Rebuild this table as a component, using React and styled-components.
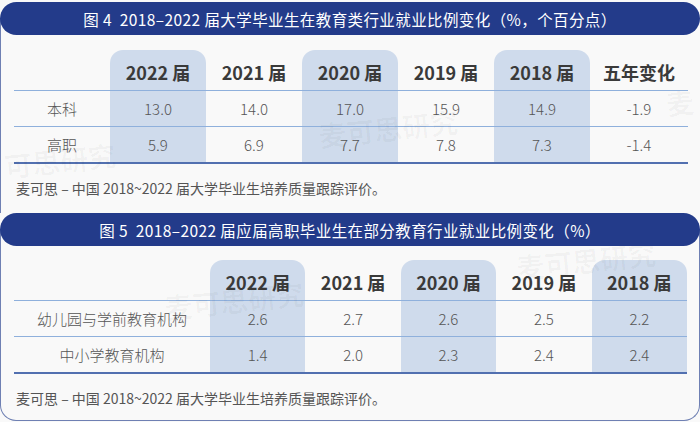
import React from "react";
import styled, { createGlobalStyle } from "styled-components";

const GlobalStyle = createGlobalStyle`
  html, body {
    margin: 0;
    padding: 0;
    background: #f9f9f9;
  }
  body {
    font-family: "Noto Sans CJK SC", "Noto Sans", sans-serif;
  }
`;

const Page = styled.div`
  position: relative;
  width: 700px;
  height: 422px;
  overflow: hidden;
  padding-top: 2px;
  box-sizing: border-box;
`;

const Panel = styled.section`
  display: flex;
  flex-direction: column;
`;

const TitleBar = styled.div`
  height: 33px;
  background: #233b8a;
  border-radius: 17px;
  color: #fff;
  font-size: 15.5px;
  font-weight: 400;
  letter-spacing: 0.4px;
  display: flex;
  align-items: center;
  justify-content: center;
  position: relative;
  z-index: 1;
`;

const Body = styled.div`
  margin-top: -17px;
  padding: ${(p) => p.$top}px 12px 0 13px;
  border-left: 1px solid #6f80b3;
  border-right: ${(p) => (p.$closed ? "1px solid #6f80b3" : "none")};
  border-bottom: ${(p) => (p.$closed ? "1px solid #6f80b3" : "none")};
  border-radius: ${(p) => (p.$closed ? "0 0 16px 16px" : "0")};
  height: ${(p) => p.$height}px;
  box-sizing: border-box;
`;

const Table = styled.div`
  display: flex;
  flex-direction: column;
`;

const Row = styled.div`
  display: grid;
  grid-template-columns: ${(p) => p.$cols};
  height: ${(p) => p.$h}px;
  border-bottom: ${(p) => (p.$last ? "2px solid #5270b0" : "1px solid #8fb0dc")};
`;

const Cell = styled.div`
  display: flex;
  align-items: center;
  justify-content: center;
  background: ${(p) => (p.$hl ? "#cfdbec" : "transparent")};
  border-radius: ${(p) => (p.$hl && p.$head ? "13px 13px 0 0" : "0")};
  color: ${(p) => (p.$head ? "#3a3a3a" : "#555")};
  font-size: ${(p) => (p.$head ? "18px" : "15px")};
  font-weight: ${(p) => (p.$head ? 700 : 300)};
  padding-top: ${(p) => (p.$head ? "3px" : "0")};
  white-space: nowrap;
`;

const Source = styled.div`
  margin-top: 15px;
  padding-left: 2px;
  font-size: 14px;
  color: #555;
  line-height: 18px;
`;

const Watermark = styled.span`
  position: absolute;
  left: ${(p) => p.$x}px;
  top: ${(p) => p.$y}px;
  font-size: 28px;
  font-weight: 700;
  color: rgba(0, 0, 0, 0.03);
  transform: rotate(-6deg);
  pointer-events: none;
  white-space: nowrap;
`;

const years = ["2022 届", "2021 届", "2020 届", "2019 届", "2018 届"];
const hlCols = [true, false, true, false, true];

const table1 = {
  cols: "96px repeat(5, 96px) 98px",
  head: [...years, "五年变化"],
  rows: [
    ["本科", "13.0", "14.0", "17.0", "15.9", "14.9", "-1.9"],
    ["高职", "5.9", "6.9", "7.7", "7.8", "7.3", "-1.4"],
  ],
};

const table2 = {
  cols: "196px repeat(5, 1fr)",
  head: years,
  rows: [
    ["幼儿园与学前教育机构", "2.6", "2.7", "2.6", "2.5", "2.2"],
    ["中小学教育机构", "1.4", "2.0", "2.3", "2.4", "2.4"],
  ],
};

function DataTable({ data }) {
  return (
    <Table>
      <Row $cols={data.cols} $h={40}>
        <Cell $head />
        {data.head.map((h, i) => (
          <Cell key={h} $head $hl={hlCols[i]}>
            {h}
          </Cell>
        ))}
      </Row>
      {data.rows.map((r, ri) => (
        <Row key={r[0]} $cols={data.cols} $h={35} $last={ri === data.rows.length - 1}>
          {r.map((v, i) => (
            <Cell key={i} $hl={i > 0 && hlCols[i - 1]}>
              {v}
            </Cell>
          ))}
        </Row>
      ))}
    </Table>
  );
}

const source = "麦可思 – 中国 2018~2022 届大学毕业生培养质量跟踪评价。";

export default function App() {
  return (
    <>
      <GlobalStyle />
      <Page>
        <Panel>
          <TitleBar>图 4&nbsp;&nbsp;2018–2022 届大学毕业生在教育类行业就业比例变化（%，个百分点）</TitleBar>
          <Body $top={32} $height={195}>
            <DataTable data={table1} />
            <Source>{source}</Source>
          </Body>
        </Panel>
        <Panel>
          <TitleBar>图 5&nbsp;&nbsp;2018–2022 届应届高职毕业生在部分教育行业就业比例变化（%）</TitleBar>
          <Body $top={31} $height={192} $closed>
            <DataTable data={table2} />
            <Source>{source}</Source>
          </Body>
        </Panel>
        <Watermark $x={4} $y={140}>可思研究</Watermark>
        <Watermark $x={318} $y={108}>麦可思研究</Watermark>
        <Watermark $x={666} $y={82}>麦</Watermark>
        <Watermark $x={164} $y={280}>麦可思研究</Watermark>
        <Watermark $x={516} $y={240}>麦可思研究</Watermark>
      </Page>
    </>
  );
}
